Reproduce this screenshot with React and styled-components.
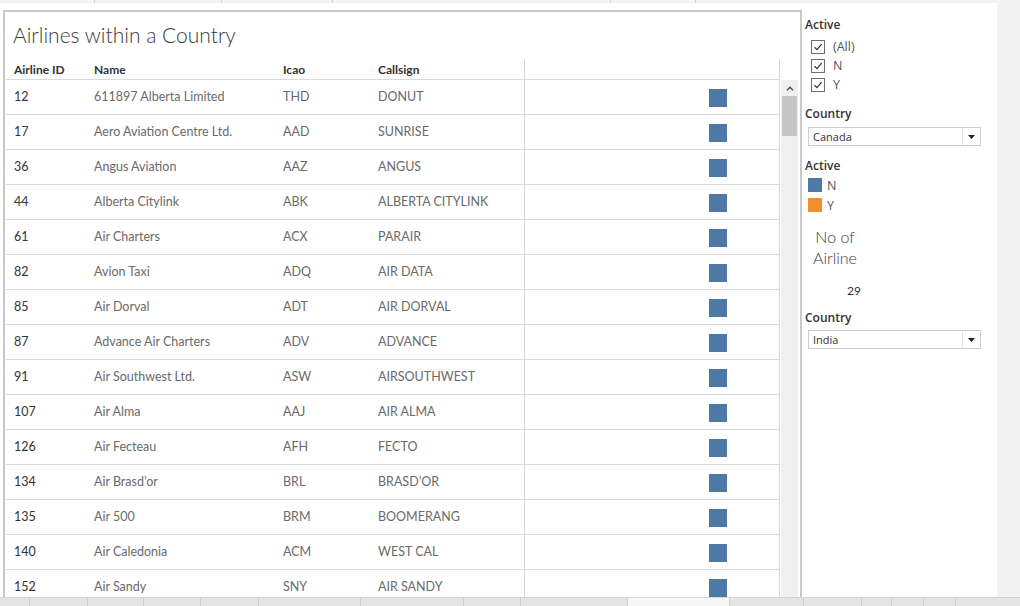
import React from "react";
import styled, { createGlobalStyle } from "styled-components";

const GlobalStyle = createGlobalStyle`
  *, *::before, *::after { box-sizing: border-box; }
  html, body { margin: 0; padding: 0; }
  body {
    width: 1020px;
    height: 606px;
    overflow: hidden;
    background: #f3f3f3;
    font-family: Lato, "Open Sans", sans-serif;
  }
`;

const rows = [
  ["12", "611897 Alberta Limited", "THD", "DONUT"],
  ["17", "Aero Aviation Centre Ltd.", "AAD", "SUNRISE"],
  ["36", "Angus Aviation", "AAZ", "ANGUS"],
  ["44", "Alberta Citylink", "ABK", "ALBERTA CITYLINK"],
  ["61", "Air Charters", "ACX", "PARAIR"],
  ["82", "Avion Taxi", "ADQ", "AIR DATA"],
  ["85", "Air Dorval", "ADT", "AIR DORVAL"],
  ["87", "Advance Air Charters", "ADV", "ADVANCE"],
  ["91", "Air Southwest Ltd.", "ASW", "AIRSOUTHWEST"],
  ["107", "Air Alma", "AAJ", "AIR ALMA"],
  ["126", "Air Fecteau", "AFH", "FECTO"],
  ["134", "Air Brasd\u2019or", "BRL", "BRASD\u2019OR"],
  ["135", "Air 500", "BRM", "BOOMERANG"],
  ["140", "Air Caledonia", "ACM", "WEST CAL"],
  ["152", "Air Sandy", "SNY", "AIR SANDY"],
];

const topTabs = [95, 127, 111, 278, 85];
const bottomTabs = [30, 58, 56, 57, 58, 102, 103, 57, 107, 102, 74, 58, 30, 32, 32];

const Page = styled.div`
  display: flex;
  flex-direction: column;
  width: 1020px;
  height: 606px;
  overflow: hidden;
  background: #f3f3f3;
`;

const TopStrip = styled.div`
  flex: none;
  height: 3px;
  display: flex;
  background: #f3f3f3;
`;

const TopTab = styled.div`
  width: ${(p) => p.$w}px;
  border-right: 1px solid #d2d2d2;
`;

const Main = styled.div`
  flex: none;
  height: 594px;
  display: flex;
`;

const Dashboard = styled.div`
  width: 997px;
  background: #fff;
  display: flex;
  padding-left: 3px;
`;

const Sheet = styled.div`
  width: 799px;
  margin-top: 7px;
  border: 2px solid #c9c9c9;
  border-bottom: none;
  display: flex;
  flex-direction: column;
  overflow: hidden;
`;

const Title = styled.div`
  padding: 9px 8px 11px;
  font-size: 21px;
  line-height: 27px;
  color: #3a3a3a;
  font-weight: 300;
`;

const TableWrap = styled.div`
  flex: 1;
  display: flex;
  padding-left: 1px;
  min-height: 0;
`;

const Grid = styled.div`
  width: 774px;
  display: flex;
  flex-direction: column;
`;

const Row = styled.div`
  display: grid;
  grid-template-columns: 81px 189px 95px 153px 256px;
  height: ${(p) => (p.$head ? 21 : 35)}px;
  flex: none;
  border-bottom: 1px solid #dadada;
`;

const Cell = styled.div`
  display: flex;
  align-items: ${(p) => (p.$head ? "flex-end" : "center")};
  padding-left: ${(p) => (p.$first ? 8 : 7)}px;
  padding-bottom: 2px;
  font-size: ${(p) => (p.$head ? 12 : 12.5)}px;
  font-weight: ${(p) => (p.$head ? 700 : 400)};
  color: ${(p) => (p.$head || p.$first ? "#333" : "#6a6a6a")};
  white-space: nowrap;
`;

const MarkCell = styled.div`
  border-left: 1px solid #d6d6d6;
  border-right: 1px solid #d6d6d6;
  margin-bottom: -1px;
  display: flex;
  align-items: center;
  padding-left: 184px;
`;

const Square = styled.div`
  width: 18px;
  height: 18px;
  background: #4e79a7;
`;

const Scrollbar = styled.div`
  width: 17px;
  margin-left: 1px;
  margin-top: 21px;
  background: #f0f0f0;
  display: flex;
  flex-direction: column;
  align-items: center;
`;

const ScrollArrow = styled.div`
  height: 16px;
  display: flex;
  align-items: center;
  justify-content: center;
`;

const Thumb = styled.div`
  width: 15px;
  height: 40px;
  background: #c6c6c6;
`;

const Side = styled.div`
  width: 195px;
  padding: 14px 0 0 3px;
  font-family: "Open Sans", sans-serif;
  color: #333;
`;

const Heading = styled.div`
  font-size: 12px;
  font-weight: 600;
  line-height: 16px;
  color: #333;
  margin-top: ${(p) => p.$mt || 0}px;
`;

const CheckList = styled.div`
  margin-top: 4px;
`;

const CheckRow = styled.div`
  height: 19px;
  display: flex;
  align-items: center;
  padding-left: 6px;
  gap: 8px;
  font-size: 12.5px;
  color: #555;
`;

const Box = styled.div`
  width: 14px;
  height: 14px;
  border: 1px solid #6f6f6f;
  display: flex;
  align-items: center;
  justify-content: center;
`;

const Dropdown = styled.div`
  width: 173px;
  height: 19px;
  margin: ${(p) => p.$mt}px 0 0 3px;
  border: 1px solid #cdcdcd;
  display: flex;
`;

const DropText = styled.div`
  flex: 1;
  padding-left: 4px;
  font-size: 11px;
  line-height: 17px;
  color: #333;
`;

const DropArrow = styled.div`
  width: 18px;
  border-left: 1px solid #e0e0e0;
  display: flex;
  align-items: center;
  justify-content: center;
`;

const Legend = styled.div`
  margin-top: 1px;
`;

const LegendRow = styled.div`
  height: 20px;
  display: flex;
  align-items: center;
  padding-left: 3px;
  gap: 5px;
  font-size: 12.5px;
  color: #555;
`;

const Swatch = styled.div`
  width: 14px;
  height: 14px;
  background: ${(p) => p.$c};
`;

const BigLabel = styled.div`
  width: 60px;
  margin-top: 11px;
  text-align: center;
  font-family: Lato, sans-serif;
  font-size: 16px;
  font-weight: 300;
  line-height: 21px;
  color: #3a3a3a;
`;

const Count = styled.div`
  margin-top: 15px;
  padding-left: 42px;
  font-family: Lato, sans-serif;
  font-size: 12px;
  line-height: 16px;
  color: #333;
`;

const Filler = styled.div`
  flex: 1;
  background: #f3f3f3;
`;

const BottomStrip = styled.div`
  flex: none;
  height: 9px;
  display: flex;
  background: #e4e4e4;
  border-top: 1px solid #d4d4d4;
`;

const BottomTab = styled.div`
  width: ${(p) => p.$w}px;
  flex: none;
  border-right: 1px solid #cfcfcf;
  background: ${(p) => (p.$active ? "#f7f7f7" : "transparent")};
`;

function Check() {
  return (
    <svg width="10" height="10" viewBox="0 0 10 10">
      <polyline points="1.5,5.2 4,7.6 8.6,2.2" fill="none" stroke="#333" strokeWidth="1.2" />
    </svg>
  );
}

function Caret() {
  return (
    <svg width="7" height="4" viewBox="0 0 7 4">
      <polygon points="0,0 7,0 3.5,4" fill="#222" />
    </svg>
  );
}

function Chevron() {
  return (
    <svg width="8" height="5" viewBox="0 0 8 5">
      <polyline points="1,4.2 4,1.2 7,4.2" fill="none" stroke="#444" strokeWidth="1.4" />
    </svg>
  );
}

export default function App() {
  return (
    <Page>
      <GlobalStyle />
      <TopStrip>
        {topTabs.map((w, i) => (
          <TopTab key={i} $w={w} />
        ))}
      </TopStrip>
      <Main>
        <Dashboard>
          <Sheet>
            <Title>Airlines within a Country</Title>
            <TableWrap>
              <Grid>
                <Row $head>
                  <Cell $head $first>Airline ID</Cell>
                  <Cell $head>Name</Cell>
                  <Cell $head>Icao</Cell>
                  <Cell $head>Callsign</Cell>
                  <MarkCell />
                </Row>
                {rows.map((r) => (
                  <Row key={r[0]}>
                    <Cell $first>{r[0]}</Cell>
                    <Cell>{r[1]}</Cell>
                    <Cell>{r[2]}</Cell>
                    <Cell>{r[3]}</Cell>
                    <MarkCell>
                      <Square />
                    </MarkCell>
                  </Row>
                ))}
              </Grid>
              <Scrollbar>
                <ScrollArrow>
                  <Chevron />
                </ScrollArrow>
                <Thumb />
              </Scrollbar>
            </TableWrap>
          </Sheet>
          <Side>
            <Heading>Active</Heading>
            <CheckList>
              {["(All)", "N", "Y"].map((l) => (
                <CheckRow key={l}>
                  <Box>
                    <Check />
                  </Box>
                  {l}
                </CheckRow>
              ))}
            </CheckList>
            <Heading $mt={12}>Country</Heading>
            <Dropdown $mt={5}>
              <DropText>Canada</DropText>
              <DropArrow>
                <Caret />
              </DropArrow>
            </Dropdown>
            <Heading $mt={12}>Active</Heading>
            <Legend>
              <LegendRow>
                <Swatch $c="#4e79a7" />N
              </LegendRow>
              <LegendRow>
                <Swatch $c="#f28e2b" />Y
              </LegendRow>
            </Legend>
            <BigLabel>No of Airline</BigLabel>
            <Count>29</Count>
            <Heading $mt={11}>Country</Heading>
            <Dropdown $mt={4}>
              <DropText>India</DropText>
              <DropArrow>
                <Caret />
              </DropArrow>
            </Dropdown>
          </Side>
        </Dashboard>
        <Filler />
      </Main>
      <BottomStrip>
        {bottomTabs.map((w, i) => (
          <BottomTab key={i} $w={w} $active={i === 9} />
        ))}
      </BottomStrip>
    </Page>
  );
}
